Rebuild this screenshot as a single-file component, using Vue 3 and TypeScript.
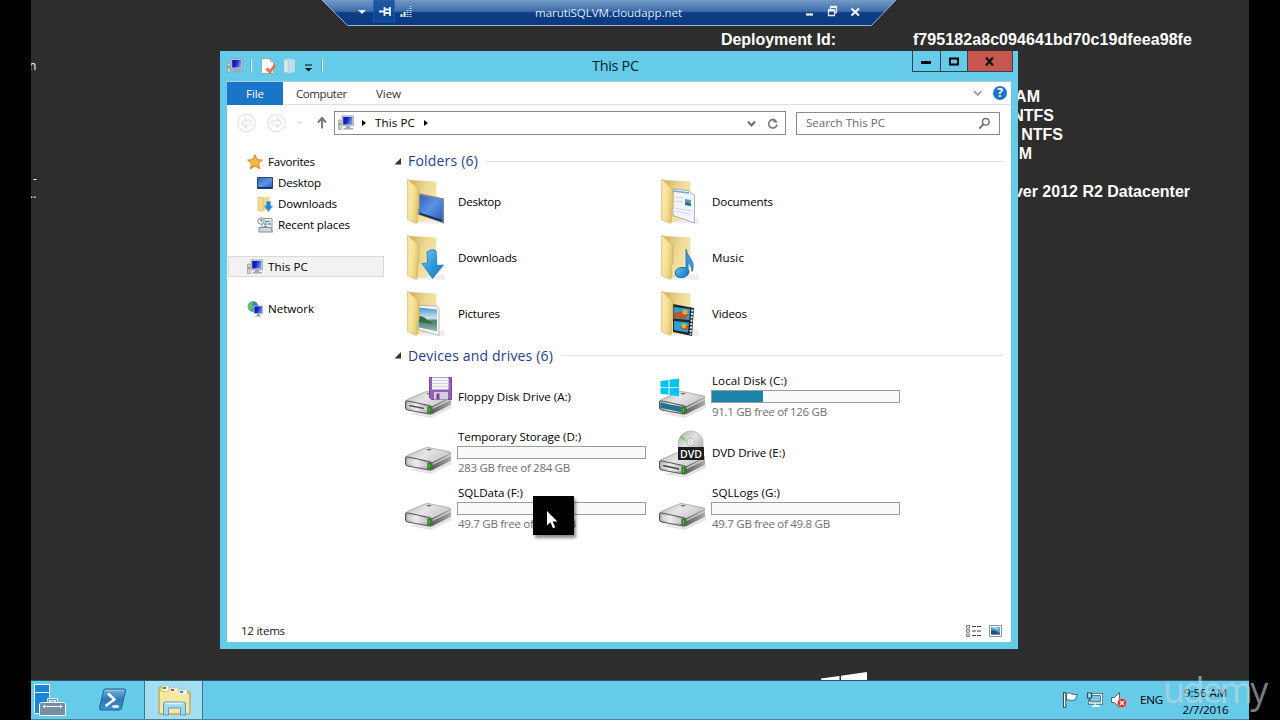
<script setup lang="ts">
interface FolderItem { name: string; w: number; kind: string }
interface DriveItem { name: string; w: number; kind: string; free?: string; fw?: number; used?: number }
interface NavItem { name: string; w: number; icon: string; sub?: boolean; gap?: boolean; active?: boolean }

const nav: NavItem[] = [
  { name: 'Favorites', w: 47, icon: 'star' },
  { name: 'Desktop', w: 43, icon: 'screen', sub: true },
  { name: 'Downloads', w: 59, icon: 'down', sub: true },
  { name: 'Recent places', w: 72, icon: 'recent', sub: true },
  { name: 'This PC', w: 40, icon: 'pc', gap: true, active: true },
  { name: 'Network', w: 46, icon: 'net', gap: true },
]
const folders: FolderItem[] = [
  { name: 'Desktop', w: 43, kind: 'desktop' },
  { name: 'Documents', w: 61, kind: 'documents' },
  { name: 'Downloads', w: 59, kind: 'downloads' },
  { name: 'Music', w: 32, kind: 'music' },
  { name: 'Pictures', w: 42, kind: 'pictures' },
  { name: 'Videos', w: 35, kind: 'videos' },
]
const drives: DriveItem[] = [
  { name: 'Floppy Disk Drive (A:)', w: 113, kind: 'floppy' },
  { name: 'Local Disk (C:)', w: 75, kind: 'system', free: '91.1 GB free of 126 GB', fw: 115, used: 27.5 },
  { name: 'Temporary Storage (D:)', w: 123, kind: 'disk', free: '283 GB free of 284 GB', fw: 112, used: 0 },
  { name: 'DVD Drive (E:)', w: 73, kind: 'dvd' },
  { name: 'SQLData (F:)', w: 65, kind: 'disk', free: '49.7 GB free of 49.8 GB', fw: 118, used: 0 },
  { name: 'SQLLogs (G:)', w: 68, kind: 'disk', free: '49.7 GB free of 49.8 GB', fw: 118, used: 0 },
]
const info = [
  { label: 'Deployment Id:', value: 'f795182a8c094641bd70c19dfeea98fe', w: 279 },
  { value: '', w: 0 },
  { value: '', w: 0 },
  { value: 'AM', w: 127 },
  { value: 'NTFS', w: 141 },
  { value: 'NTFS', w: 150 },
  { value: 'M', w: 119 },
  { value: '', w: 0 },
  { value: 'ver 2012 R2 Datacenter', w: 277 },
]

// Tracks a label so that it fills the given width in pixels.
const vFit = {
  mounted(el: HTMLElement, binding: { value: number }) {
    const n = (el.textContent ?? '').trim().length
    const natural = el.getBoundingClientRect().width
    if (n > 1) el.style.letterSpacing = `${((binding.value - natural) / (n - 0.5)).toFixed(3)}px`
  },
}
</script>

<template>
  <div class="stage">
    <svg class="defs" width="0" height="0">
      <defs>
        <linearGradient id="gFlap" x1="0" y1="0" x2="1" y2="0.3"><stop offset="0" stop-color="#fbeeb0" /><stop offset="0.6" stop-color="#f5df94" /><stop offset="1" stop-color="#e2c36c" /></linearGradient>
        <linearGradient id="gBack" x1="0" y1="0" x2="1" y2="0.6"><stop offset="0" stop-color="#cdae5a" /><stop offset="0.5" stop-color="#ecd791" /><stop offset="1" stop-color="#f8eab2" /></linearGradient>
        <linearGradient id="gBlue" x1="0" y1="0" x2="1" y2="1"><stop offset="0" stop-color="#2f62bd" /><stop offset="0.5" stop-color="#5d93e4" /><stop offset="1" stop-color="#2a5cc0" /></linearGradient>
        <linearGradient id="gArrow" x1="0" y1="0" x2="1" y2="1"><stop offset="0" stop-color="#7cc6ef" /><stop offset="0.5" stop-color="#2f9bdd" /><stop offset="1" stop-color="#1673bb" /></linearGradient>
        <linearGradient id="gTop" x1="0" y1="0" x2="1" y2="0.4"><stop offset="0" stop-color="#b4b4b4" /><stop offset="0.5" stop-color="#e6e6e6" /><stop offset="1" stop-color="#c8c8c8" /></linearGradient>
        <linearGradient id="gFront" x1="0" y1="0" x2="1" y2="0"><stop offset="0" stop-color="#a0a0a0" /><stop offset="0.4" stop-color="#f1f1f1" /><stop offset="1" stop-color="#8d8d8d" /></linearGradient>
        <linearGradient id="gSide" x1="0" y1="0" x2="1" y2="0"><stop offset="0" stop-color="#5c5c5c" /><stop offset="1" stop-color="#a8a8a8" /></linearGradient>
        <linearGradient id="gSky" x1="0" y1="0" x2="0" y2="1"><stop offset="0" stop-color="#4c94cf" /><stop offset="0.45" stop-color="#cfe8ee" /><stop offset="0.55" stop-color="#4f8259" /><stop offset="1" stop-color="#89b8cc" /></linearGradient>
        <linearGradient id="gDisc" x1="0" y1="0" x2="1" y2="1"><stop offset="0" stop-color="#b0b0b0" /><stop offset="0.45" stop-color="#e4e4e4" /><stop offset="1" stop-color="#999" /></linearGradient>
        <linearGradient id="gPs" x1="0" y1="0" x2="0" y2="1"><stop offset="0" stop-color="#7db4dd" /><stop offset="0.5" stop-color="#2f78bb" /><stop offset="1" stop-color="#3f93cd" /></linearGradient>
        <linearGradient id="gRdp" x1="0" y1="0" x2="0" y2="1"><stop offset="0" stop-color="#7399c6" /><stop offset="0.44" stop-color="#3f6caa" /><stop offset="0.5" stop-color="#0f3d85" /><stop offset="1" stop-color="#0b3a80" /></linearGradient>
        <linearGradient id="gScr" x1="0" y1="0" x2="1" y2="0.3"><stop offset="0" stop-color="#0c14a6" /><stop offset="0.5" stop-color="#1722c8" /><stop offset="1" stop-color="#6d8bea" /></linearGradient>
        <g id="pc"><path d="M.5 5h2.600v9.500H.5z" fill="#d5d8d0" stroke="#8d9490" stroke-width=".7" /><path d="M1 8h1.500v2H1z" fill="#66a860" /><path d="M4 .8h11.500v10H4z" fill="#c9ced6" stroke="#8b93a0" stroke-width=".6" /><path d="M5.200 2h9v7.500h-9z" fill="url(#gScr)" /><path d="M8 11h4l.5 2H15v1.500H5.500V13h2z" fill="#a4a9b0" /></g>
        <g id="drive">
          <path d="M5 42l22 4 21-10v-4z" fill="#000" opacity=".1" />
          <path d="M1.500 29.500Q2 28 4 27.200L21 20q1.500-.7 3.500-.4L45 23.700q2 .5 2 2L28 35.500 2 31z" fill="url(#gTop)" stroke="#8a8a8a" stroke-width=".6" />
          <path d="M27.500 34.500L47 25v6.500q0 1.200-1.500 2L28 42.300z" fill="url(#gSide)" />
          <path d="M28 35.500L47 26v2L28 37.500z" fill="#ddd" opacity=".7" />
          <path d="M1.500 29.500q.3-.9 2-.6L26 33.700q2 .5 2 2v5q0 1.700-2 1.400L3.500 38q-2-.5-2-2z" fill="url(#gFront)" stroke="#555" stroke-width="1" />
          <path d="M3.500 31l19.500 4v4L3.500 36z" fill="#e8e8e8" opacity=".55" />
          <path d="M24 35.300h2.800v5.600H24z" fill="#39cf1e" stroke="#165c10" stroke-width=".9" />
          <ellipse cx="25" cy="21.600" rx="2.500" ry=".9" fill="#777" />
        </g>
        <g id="logo"><path d="M0 2.500L8 1.400v7H0zM9 1.300L18.500 0v8.400H9zM0 9.300h8v7L0 15.200zM9 9.300h9.500v8.500L9 16.500z" /></g>
      </defs>
    </svg>

    <div class="desktop">
      <div class="edge e1">n</div>
      <div class="edge e2">-</div>
      <div class="edge e3">..</div>
      <div class="info">
        <div v-for="(r, i) in info" :key="i" class="irow">
          <span class="ilabel"><span v-if="r.label" v-fit="115">{{ r.label }}</span></span>
          <span class="ivalue" :style="{ width: r.w + 'px' }"><span v-if="i === 0" v-fit="279">{{ r.value }}</span><template v-else>{{ r.value }}</template></span>
        </div>
      </div>
      <svg class="walllogo" width="48" height="10" viewBox="0 0 48 10"><path d="M1 6.500L19.500 4v6H1zM21 3.700L47 0v10H21z" fill="#fff" /></svg>
    </div>

    <div class="rdp">
      <svg width="574" height="27" viewBox="0 0 574 27">
        <path d="M0 0H574L549.500 25.500H25.500z" fill="url(#gRdp)" />
        <path d="M0 0L25.500 25.500H549.500L574 0" fill="none" stroke="#9db3d0" stroke-width="1" />
        <path d="M51.500 0h21v21.500h-21z" fill="#0b4a9b" stroke="#1464b4" opacity=".8" />
        <path d="M36 10h8l-4 4z" fill="#e6edf6" />
        <path d="M57 11.500h5M62.500 7v9M62.500 9.500h5M62.500 13h5M68 7v9" stroke="#eef3fa" stroke-width="1.800" fill="none" />
        <path d="M79.500 17v-3M82.500 17v-5" stroke="#eef3fa" stroke-width="2" />
        <path d="M85.500 17V9.500M88.500 17V6" stroke="#c4d1e4" stroke-width="2" stroke-dasharray="1 1" />
        <path d="M484 14.500h7" stroke="#eef3fa" stroke-width="2.200" />
        <path d="M506.500 10h6v5.500h-6zM508.500 9.500v-3h6v6h-2" stroke="#dfe8f3" stroke-width="1.300" fill="none" />
        <path d="M506 10.500h7M508 7h7" stroke="#eef3fa" stroke-width="2" />
        <path d="M529.500 8.500l7.500 7M537 8.500l-7.500 7" stroke="#eef3fa" stroke-width="2.200" />
      </svg>
      <span class="host"><span v-fit="147">marutiSQLVM.cloudapp.net</span></span>
    </div>

    <section class="window">
      <header class="title">
        <div class="quick">
          <svg width="100" height="18" viewBox="0 0 100 18">
            <use href="#pc" x="0" y="1" />
            <path d="M24.500 2v13M95.500 2v13" stroke="#eaf7fc" /><path d="M23.500 2v13M94.500 2v13" stroke="#4d9db8" stroke-width=".7" />
            <path d="M34.500 1.500h9l3 3v12h-12z" fill="#fff" stroke="#98a9b2" /><path d="M43.500 1.500v3h3" fill="none" stroke="#98a9b2" /><path d="M39.500 11.500l3.500 3.500 5-7" fill="none" stroke="#ea7552" stroke-width="3" />
            <path d="M57 2.500l4-1 7 1.200V15l-7 1.500-4-1z" fill="#bfdeec" /><path d="M57 2.500l4 1.500v12l-4-1z" fill="#dceaf1" stroke="#a3bfca" stroke-width=".5" />
            <path d="M78 8h7" stroke="#17313b" stroke-width="1.300" /><path d="M78 11h7l-3.500 3.500z" fill="#000" />
          </svg>
        </div>
        <h1><span v-fit="47">This PC</span></h1>
        <div class="buttons">
          <span class="wb wmin"><svg width="10" height="3"><path d="M0 0h10v3H0z" /></svg></span>
          <span class="wb wmax"><svg width="10" height="9"><path d="M1 1.500h8v6H1z" fill="none" stroke="#000" stroke-width="2" /></svg></span>
          <span class="wb wclose"><svg width="9" height="9"><path d="M1 .5l7 8M8 .5l-7 8" stroke="#111" stroke-width="2.200" /></svg></span>
        </div>
      </header>
      <div class="client">
        <div class="tabs">
          <span class="tab file"><span v-fit="18">File</span></span>
          <span class="tab comp"><span v-fit="51">Computer</span></span>
          <span class="tab"><span v-fit="25">View</span></span>
          <svg class="right help" width="34" height="16" viewBox="0 0 34 16">
            <path d="M1 6l3.700 4L8.500 6" fill="none" stroke="#8c9ba1" stroke-width="1.800" />
            <circle cx="27" cy="8" r="7" fill="#1d75c9" />
            <text x="27" y="12.300" text-anchor="middle" class="q">?</text>
          </svg>
        </div>
        <div class="nav">
          <svg class="arrows" width="100" height="24" viewBox="0 0 100 24">
            <g fill="none" stroke="#e4e1e4" stroke-width="1.200">
              <circle cx="12.500" cy="12" r="8.700" /><path d="M12 7.500L7.500 12l4.500 4.500V14h5v-4h-5z" />
              <circle cx="42.500" cy="12" r="8.700" /><path d="M43 7.500l4.500 4.500-4.500 4.500V14h-5v-4h5z" />
            </g>
            <path d="M62 10.500h7l-3.500 3z" fill="#e2dfe2" />
            <path d="M88 17.500V7.500M84 11.500l4-4.500 4 4.500" fill="none" stroke="#777" stroke-width="1.900" />
          </svg>
          <div class="address">
            <svg width="17" height="16" viewBox="0 0 17 16"><use href="#pc" /></svg>
            <i class="tri t1"></i><span v-fit="40">This PC</span><i class="tri t2"></i>
            <svg class="right" width="36" height="16" viewBox="0 0 36 16">
              <path d="M4 6.500l3.500 4L11 6.500" fill="none" stroke="#6b6b6b" stroke-width="1.900" />
              <path d="M32 6A4.200 4.200 0 1 0 33 9.500" fill="none" stroke="#777" stroke-width="1.600" /><path d="M29.500 3v4.500H34z" fill="#777" />
            </svg>
          </div>
          <div class="search">
            <span v-fit="79">Search This PC</span>
            <svg class="right" width="13" height="13" viewBox="0 0 13 13"><circle cx="7.800" cy="4.800" r="3.300" fill="none" stroke="#777" stroke-width="1.500" /><path d="M5.500 7.200L1.200 11.500" stroke="#777" stroke-width="2" /></svg>
          </div>
        </div>
        <div class="body">
          <aside>
            <div v-for="n in nav" :key="n.name + n.icon" class="nitem" :class="{ sub: n.sub, gap: n.gap, active: n.active }">
              <svg width="16" height="16" viewBox="0 0 16 16">
                <path v-if="n.icon === 'star'" d="M8 .7l2.100 5 5.300.4-4 3.500 1.300 5.200L8 12l-4.700 2.800 1.300-5.200-4-3.500 5.300-.4z" fill="#ffb83c" stroke="#e07f24" />
                <g v-else-if="n.icon === 'screen'"><path d="M.5 2.500h15v11H.5z" fill="url(#gBlue)" stroke="#29476e" /><path d="M1 12h14v1.500H1z" fill="#1c3358" /></g>
                <g v-else-if="n.icon === 'down'"><path d="M4 1h8v13H4z" fill="#f0d888" /><path d="M1 1l5 1v13.500L1 14z" fill="#f4dd8e" stroke="#d4ae50" stroke-width=".6" /><path d="M9.500 5.500h4V10h2.200l-4.200 5.500L7.300 10h2.200z" fill="#2487d2" stroke="#4ea8e4" stroke-width=".6" /></g>
                <g v-else-if="n.icon === 'recent'"><path d="M5 1.500h10v12H5z" fill="#eef1f2" stroke="#8e989c" /><path d="M8 4.500h5M7 7h3M11 7h3M7 9.500h3" stroke="#5a9fa8" stroke-width="1.400" /><path d="M2 10.500h12l1.500 4.500H2z" fill="#d4d8d9" stroke="#878d90" /><circle cx="4" cy="4" r="3.200" fill="#f8f8f8" stroke="#8a9094" /><path d="M4 2v2h1.700" fill="none" stroke="#4b5560" /></g>
                <use v-else-if="n.icon === 'pc'" href="#pc" />
                <g v-else><circle cx="6" cy="5.500" r="5.300" fill="#2d86c8" /><path d="M1 4q4-5 6-3.500L5 4l2 2-4 4q-3-2-2-6z" fill="#65c16a" /><path d="M7 5h8.500v7.500H7z" fill="url(#gScr)" stroke="#a9b8d6" /><path d="M10 12.500h2.500v2H14v1H8.500v-1H10z" fill="#8d99a9" /></g>
              </svg>
              <span v-fit="n.w">{{ n.name }}</span>
            </div>
          </aside>
          <main>
            <div class="group"><svg width="7" height="7"><path d="M7 0v6.500H.5z" fill="#333" /></svg><h2><span v-fit="70">Folders (6)</span></h2><hr /></div>
            <div class="grid">
              <div v-for="f in folders" :key="f.name" class="tile">
                <svg width="48" height="48" viewBox="0 0 48 48">
                  <path d="M12 45l29 1-1-6z" fill="#000" opacity=".07" />
                  <path d="M5 2l26 1.800q1 0 1 1V41L12 44z" fill="url(#gBack)" stroke="#e6d08a" stroke-width=".5" />
                  <g v-if="f.kind === 'desktop'"><path d="M14 15l26 5.500v25L14 36.500z" fill="#7b858e" /><path d="M15.500 17.200l23 4.800v20l-23-7.500z" fill="url(#gBlue)" /><path d="M15.500 34.500l23 7.500v2l-23-7.500z" fill="#1f2e42" /></g>
                  <g v-else-if="f.kind === 'documents'"><path d="M15 11l15 1.500 6.500 5v27.500L15 37.500z" fill="#f2f5fa" stroke="#8692a5" stroke-width=".7" /><path d="M15 13l16 2" stroke="#6ba4d5" stroke-width="1.300" /><path d="M17 19l8 1M17 23l8 1M17 30l16 3M17 33l16 3.500" stroke="#cdd5e0" /><path d="M27 21l6 1v6l-6-1z" fill="#6697c2" /><path d="M27 25l3-1 3 2.500v1.500l-6-1z" fill="#326c83" /></g>
                  <path v-else-if="f.kind === 'downloads'" d="M23 18q5-4 9-1l1 14.500 6.500-.5L28.500 44.500 18 29.500l5.500-.5z" fill="url(#gArrow)" stroke="#2078ae" stroke-width=".8" />
                  <g v-else-if="f.kind === 'music'"><ellipse cx="24" cy="38.500" rx="6.800" ry="5" transform="rotate(-12 24 38.500)" fill="url(#gArrow)" stroke="#1b70bb" /><path d="M28 15q1 5 4.500 9.500 4.500 6 1.500 13 0-6-4-9.500v11l-2-1z" fill="#3b96e4" stroke="#1b70bb" stroke-width=".8" /></g>
                  <g v-else-if="f.kind === 'pictures'"><path d="M14.500 15.500l17.500.5 3 2.500v27l-20.500-6z" fill="#f7fafb" stroke="#8ea0aa" stroke-width=".7" /><path d="M15 17.500l18 2v22L15 37.500z" fill="url(#gSky)" /><path d="M15 26q5 0 8 4l7 4-15-2z" fill="#356a47" /></g>
                  <g v-else><path d="M15 14l21 4-2 28-19-4z" fill="#1e292e" /><path d="M16 17l16 2-.8 11-15-1.500zM16 31l15 1.500-1 10L16 40z" fill="#31a1cf" /><path d="M16 23l10-2 4 3-2 5-12-1zM22 38l3-3 5 1-1 5z" fill="#bb5630" /><circle cx="27" cy="22" r="2.600" fill="#e5af37" /><circle cx="26" cy="36" r="2.400" fill="#d6b93b" /><path d="M34.300 19.500l-1.800 25" stroke="#e6eef0" stroke-width="2" stroke-dasharray="2 1.400" /></g>
                  <path d="M3.700 1.200l10.300 9.300q1 1.300 1 3V29q0 1.500-1.700 2.500V43.500q0 2.500-2 1.500L3.700 41.500z" fill="url(#gFlap)" stroke="#cfb25f" stroke-width=".7" />
                </svg>
                <span class="name"><span v-fit="f.w">{{ f.name }}</span></span>
              </div>
            </div>
            <div class="group second"><svg width="7" height="7"><path d="M7 0v6.500H.5z" fill="#333" /></svg><h2><span v-fit="145">Devices and drives (6)</span></h2><hr /></div>
            <div class="grid">
              <div v-for="d in drives" :key="d.name" class="tile">
                <svg width="48" height="48" viewBox="0 0 48 48">
                  <use href="#drive" :y="d.kind === 'dvd' ? 3 : -1" />
                  <g v-if="d.kind === 'floppy'"><path d="M5 32.500l15 3" stroke="#555" stroke-width="1.500" /><path d="M25.500 4.500h22v22h-20l-2-2z" fill="#9460b8" stroke="#764a98" /><path d="M28 4.500h16.500v12H28z" fill="#f6f4f7" /><path d="M28 7.500h16.500M28 10.500h16.500M28 13.500h16.500" stroke="#d3ced6" /><path d="M30 19h14v7.500H30z" fill="#d5cede" /><path d="M32.500 20.500h3v6h-3z" fill="#704591" /></g>
                  <g v-else-if="d.kind === 'system'"><use href="#logo" x="2.500" y="5.500" fill="#00c4f5" /><path d="M2.500 29.500l21 4.300v5.500l-21-4.300z" fill="#24708f" /></g>
                  <g v-else-if="d.kind === 'dvd'"><path d="M5 36.500l16 3.500" stroke="#444" stroke-width="1.500" /><circle cx="32.700" cy="14.500" r="12.500" fill="url(#gDisc)" stroke="#aaa" stroke-width=".7" /><path d="M21.500 9l8 4-6-7z" fill="#62d23d" opacity=".75" /><circle cx="32.700" cy="13" r="3.800" fill="#eee" stroke="#aaa" stroke-width=".7" /><circle cx="32.700" cy="13" r="1.500" fill="#fff" stroke="#999" stroke-width=".5" /><path d="M20 18h26v13H20z" fill="#1d1d1f" /><text x="33" y="28.600" text-anchor="middle" class="dvd">DVD</text></g>
                </svg>
                <div class="meta" :class="{ full: d.free }">
                  <span class="name"><span v-fit="d.w">{{ d.name }}</span></span>
                  <template v-if="d.free">
                    <div class="bar"><div class="used" :style="{ width: d.used + '%' }"></div></div>
                    <span class="name free"><span v-fit="d.fw">{{ d.free }}</span></span>
                  </template>
                </div>
              </div>
            </div>
          </main>
        </div>
        <footer>
          <span v-fit="44">12 items</span>
          <svg class="right" width="37" height="14" viewBox="0 0 37 14">
            <g fill="none" stroke="#777" stroke-width="1"><path d="M.5 1.500h3v2.500h-3zM.5 5.700h3v2.500h-3zM.5 10h3v2.500h-3z" /><path d="M6 2.500h4M11 2.500h4M6 7h4M11 7h4M6 11.500h4M11 11.500h4" stroke="#444" /></g>
            <path d="M23.500 1.500h12v11h-12z" fill="#fff" stroke="#89979f" /><path d="M25 3h9v7.500h-9z" fill="#4fa4dc" /><path d="M25 6.500q4-1 9 3v1h-9z" fill="#23536e" /><path d="M25 3h5l4 3z" fill="#c7e9f8" />
          </svg>
        </footer>
      </div>
    </section>

    <div class="cursor"><svg width="41" height="39" viewBox="0 0 41 39"><path d="M14 15v14.500l3.400-3.200 2.600 6 2.200-1-2.600-5.800h4.800z" fill="#fff" /></svg></div>

    <div class="taskbar">
      <span class="task sm"><svg width="36" height="36" viewBox="0 0 36 36"><path d="M3.500 2.500h15v29h-15z" fill="#1786d9" stroke="#fff" /><path d="M3.500 10.500h15" stroke="#fff" /><path d="M17.500 20v-2.500h8V20" fill="none" stroke="#fff" stroke-width="2.500" /><path d="M17.500 20v-2.500h8V20" fill="none" stroke="#6a8ba2" /><path d="M10 20.500h23l1.500 1.500v11.500h-26V22z" fill="#738fa1" stroke="#fff" /><path d="M12 24.500h19" stroke="#fff" /><path d="M11.500 24.500l2.500-2v4zM31.500 24.500l-2.500-2v4z" fill="#fff" /></svg></span>
      <span class="task ps"><svg width="32" height="28" viewBox="0 0 32 28"><path d="M8 3h19q2 0 1.500 2l-4 17q-.5 2-2.500 2H4q-2 0-1.500-2l4-17Q7 3 8 3z" fill="url(#gPs)" stroke="#225f96" /><path d="M9 4.500h17.500" stroke="#a9d4ed" opacity=".7" /><path d="M11 7.500l6.500 6L8.500 20M15.500 20.500h6" fill="none" stroke="#fff" stroke-width="2.500" /></svg></span>
      <span class="task on"><svg width="34" height="32" viewBox="0 0 34 32"><path d="M3 3h9l1 2h7l1 3h12v22H2V4z" fill="#efd478" stroke="#b49b54" /><path d="M5 2h7v5H5zM12 4h9v5h-9zM21 6h9v5h-9z" fill="#fffdf0" stroke="#c5b16d" stroke-width=".5" /><path d="M6 3h3v2H6z" fill="#28a048" /><path d="M14 5h3v2h-3z" fill="#d8492e" /><path d="M23 7h3v2h-3z" fill="#2a91d6" /><path d="M3 8h18l2 3h9v18H3z" fill="#fbe89e" /><path d="M6.500 31V20q0-2 2-2h18q2 0 2 2v11h-5v-7h-12v7z" fill="#9ed8f2" stroke="#4c9fcb" /><path d="M8 19.500h18" stroke="#e1f6ff" stroke-width="1.500" /></svg></span>
      <div class="tray">
        <svg width="66" height="18" viewBox="0 0 66 18">
          <path d="M1.500 1.500h2.300V16.500H1.500z" fill="#fff" stroke="#27515f" /><path d="M4.500 2.500q3-1.500 5.500.5 2 1 5.500.5l-2.500 5.500q-4 1-8.500-.5z" fill="#fff" stroke="#27515f" stroke-width=".8" />
          <path d="M30.500 3.500h9v8.500h-12V9" fill="#6fcbe8" stroke="#27515f" stroke-width="3" /><path d="M30.500 3.500h9v8.500h-12V9M33.500 12v3M30 15h8" fill="none" stroke="#fff" stroke-width="1.500" /><path d="M25.500 2h4v5h-4zM27.500 7v3" fill="#a9e0f0" stroke="#27515f" stroke-width="1.200" />
          <path d="M49.500 6.500h3l5-5v15l-5-5h-3z" fill="#fff" stroke="#4a6670" /><circle cx="60" cy="12" r="4.700" fill="#d92d2b" stroke="#f4c9c6" stroke-width=".6" /><path d="M58 10l4 4M62 10l-4 4" stroke="#fff" stroke-width="1.500" />
        </svg>
        <span class="eng"><span v-fit="23">ENG</span></span>
        <div class="clock"><div><span v-fit="43">9:56 AM</span></div><div><span v-fit="46">2/7/2016</span></div></div>
      </div>
    </div>
    <div class="mark"><span v-fit="104">udemy</span></div>
  </div>
</template>

<style>
html, body { background: #000; }
</style>

<style scoped>
* { box-sizing: border-box; }
.stage { position: relative; width: 1280px; height: 720px; overflow: hidden; background: #000; font: 11.6px/16px "Open Sans", "Noto Sans", sans-serif; color: #000; white-space: nowrap; }
.stage svg { display: block; flex: none; }
.defs { position: absolute; }
.right { margin-left: auto; }
.help { margin-right: 4px; }
.desktop { position: absolute; left: 31px; top: 0; width: 1218px; height: 681px; background: #2d2d2d; overflow: hidden; }
.edge { position: absolute; color: #fff; font-size: 12px; }
.e1 { left: -2px; top: 58px; }
.e2 { left: 2px; top: 171px; }
.e3 { left: -1px; top: 186px; }
.info { position: absolute; left: 690px; top: 30px; font: bold 16px/19px "Liberation Sans", Arial, sans-serif; color: #fff; }
.irow { display: flex; height: 19px; }
.ilabel { width: 192px; }
.ivalue { display: flex; justify-content: flex-end; }
.walllogo { position: absolute; left: 789px; top: 672px; }
.rdp { position: absolute; left: 322px; top: 0; width: 574px; height: 27px; }
.host { position: absolute; left: 213px; top: 5px; color: #dfe8f4; }
.window { position: absolute; left: 220px; top: 51px; width: 798px; height: 598px; background: #65cbe9; padding: 0 7px 7px; display: flex; flex-direction: column; }
.title { height: 30px; display: flex; position: relative; }
.quick { padding-top: 6px; width: 365px; }
h1 { margin: 0; font-size: 14.5px; font-weight: 400; line-height: 29px; color: #0c1f27; flex: 1; }
.buttons { display: flex; margin-right: -2px; height: 21px; border: 1px solid #2f4650; border-top: 0; }
.wb { display: flex; align-items: center; justify-content: center; border-left: 1px solid #2f4650; }
.wmin { width: 27px; border: 0; padding: 3px 2px 0 0; }
.wmax { width: 27px; padding-right: 1px; }
.wclose { width: 45px; background: #c6564f; padding-right: 2px; }
.client { flex: 1; background: #fff; display: flex; flex-direction: column; border-top: 1px solid #a8cfdb; }
.tabs { height: 23px; display: flex; align-items: center; border-bottom: 1px solid #dfe1e3; color: #333; }
.tab { padding-top: 2px; }
.file { background: #1a74c8; color: #fff; width: 56px; height: 23px; display: flex; justify-content: center; padding-top: 4px; }
.comp { margin: 0 28px 0 13px; width: 52px; }
.q { font: bold 12px "Open Sans", sans-serif; fill: #fff; }
.nav { height: 36px; display: flex; align-items: center; padding: 0 11px 0 7px; }
.address { width: 452px; height: 24px; border: 1px solid #8b8b8b; display: flex; align-items: center; padding: 0 5px 0 3px; }
.tri { border: 3.5px solid transparent; border-left: 4.5px solid #000; border-right: 0; }
.t1 { margin: 0 9px 0 7px; }
.t2 { margin-left: 9px; }
.search { margin-left: 10px; width: 204px; height: 23px; border: 1px solid #8b8b8b; display: flex; align-items: center; padding: 0 8px 0 9px; color: #6b6b6b; }
.body { flex: 1; display: flex; padding-top: 7px; }
aside { width: 158px; padding: 3px 0 0 1px; }
.nitem { height: 21px; width: 156px; display: flex; align-items: center; gap: 5px; padding-left: 18px; border: 1px solid transparent; }
.sub { padding-left: 28px; gap: 5px; }
.gap { margin-top: 21px; }
.active { background: #f2f2f3; border-color: #d9d9d9; }
main { flex: 1; padding: 0 7px 0 9px; }
.group { height: 26px; display: flex; align-items: center; }
.group svg { margin: 0 7px 0 0; }
.second { height: 27px; }
h2 { margin: 0; font-size: 14px; font-weight: 400; color: #26408e; line-height: 20px; }
.group hr { flex: 1; height: 1px; border: 0; background: #e3e3e6; margin: 0 0 0 8px; }
.grid { display: grid; grid-template-columns: 254px 254px; grid-auto-rows: 56px; padding-left: 10px; }
.tile { display: flex; align-items: center; gap: 6px; }
.name { display: block; height: 16px; }
.full { align-self: flex-start; padding-top: 4px; }
.bar { width: 189px; height: 13px; margin: 1px 0 1px -1px; border: 1px solid #9b9b9b; background: #fafafa; }
.used { height: 100%; background: #1a84aa; }
.free { color: #6f6f6f; }
.dvd { font: 600 10.5px "Open Sans", sans-serif; fill: #fff; }
footer { height: 23px; display: flex; align-items: center; padding: 0 8px 0 14px; color: #222; }
.cursor { position: absolute; left: 533px; top: 496px; width: 41px; height: 39px; background: #000; box-shadow: 2px 3px 3px rgba(0, 0, 0, 0.45); }
.taskbar { position: absolute; left: 31px; top: 680px; width: 1218px; height: 40px; background: #65cbe9; border-top: 1px solid #2f5a68; border-bottom: 1px solid #4b8194; display: flex; }
.task { width: 58px; display: flex; align-items: center; justify-content: center; }
.sm { width: 55px; justify-content: flex-start; }
.ps { padding-right: 4px; }
.on { width: 59px; background: #a3def2; border: 1px solid #39798d; border-width: 0 1px; }
.tray { margin-left: auto; display: flex; align-items: center; padding-right: 20px; }
.eng { margin-left: 12px; width: 42px; }
.clock { width: 47px; text-align: center; line-height: 17px; padding-top: 1px; }
.mark { position: absolute; left: 1163px; top: 666px; font-size: 36px; line-height: 48px; color: rgba(200, 215, 222, 0.62); }
</style>
